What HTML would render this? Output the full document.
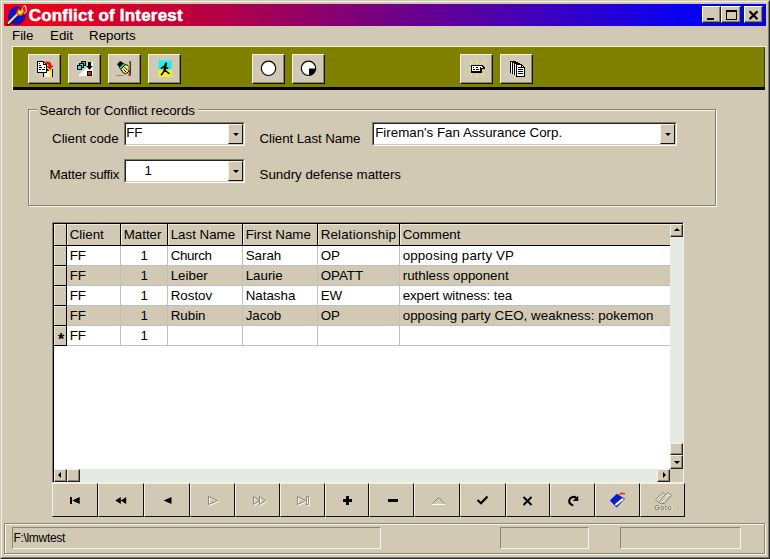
<!DOCTYPE html>
<html>
<head>
<meta charset="utf-8">
<title>Conflict of Interest</title>
<style>
html,body{margin:0;padding:0;}
body{width:770px;height:559px;overflow:hidden;background:#d1c9b3;font-family:"Liberation Sans",sans-serif;font-size:13.33px;color:#000;position:relative;}
.abs{position:absolute;}
#win{position:absolute;left:0;top:0;width:770px;height:559px;background:#d1c9b3;box-sizing:border-box;
 border-top:1px solid #d1c9b3;border-left:1px solid #d1c9b3;border-right:1px solid #2a2a2a;border-bottom:1px solid #2a2a2a;}
#win2{position:absolute;left:0;top:0;right:0;bottom:0;border-top:1px solid #f4f1e6;border-left:1px solid #f4f1e6;border-right:1px solid #7f7b6d;border-bottom:1px solid #7f7b6d;}
#title{position:absolute;left:4px;top:4px;width:762px;height:22px;background:linear-gradient(to right,rgb(240,0,24) 0%,rgb(228,0,32) 8%,rgb(194,0,56) 23%,rgb(152,0,96) 37.5%,rgb(110,0,136) 52%,rgb(78,0,172) 65%,rgb(40,0,212) 78%,rgb(6,0,244) 90%,rgb(0,0,252) 100%);}
#title .txt{position:absolute;left:24.7px;top:2px;-webkit-text-stroke:0.5px #fff;font-weight:bold;font-size:17px;line-height:20px;color:#fff;letter-spacing:0.2px;white-space:nowrap;}
.cbtn{position:absolute;top:2px;height:17px;width:19px;background:#d1c9b3;box-sizing:border-box;border-top:1px solid #fff;border-left:1px solid #fff;border-right:1px solid #222;border-bottom:1px solid #222;}
.cbtn:after{content:"";position:absolute;left:0;top:0;right:0;bottom:0;border-right:1px solid #7f7b6d;border-bottom:1px solid #7f7b6d;}
.menu{position:absolute;top:28px;font-size:13.33px;line-height:16px;white-space:nowrap;}
#tb{position:absolute;left:13px;top:47px;width:752px;height:40px;background:#808000;box-shadow:inset -1px 0 0 #3a3a10;}
#tb:before{content:'';position:absolute;left:0;top:40px;width:752px;height:3px;background:#000;}
#tb:after{content:'';position:absolute;left:-1px;top:-1px;width:754px;height:44px;box-sizing:border-box;border-left:1px solid #f6f2d2;border-top:1px solid #f6f2d2;pointer-events:none;}
.tbtn{position:absolute;top:7px;width:33px;height:30px;background:#d1c9b3;box-sizing:border-box;border-top:1px solid #f4f0e4;border-left:1px solid #f4f0e4;border-right:1px solid #101008;border-bottom:1px solid #101008;box-shadow:inset -1px -1px 0 #8c8672;}
.tbtn svg{position:absolute;left:0;top:0;}
.lbl{position:absolute;white-space:nowrap;font-size:13.33px;line-height:16px;}
.combo{position:absolute;height:24px;background:#fff;box-sizing:border-box;border-top:1px solid #7f7b6d;border-left:1px solid #7f7b6d;border-right:1px solid #fff;border-bottom:1px solid #fff;}
.combo .in{position:absolute;left:0;top:0;right:0;bottom:0;border-top:1px solid #222;border-left:1px solid #222;border-right:1px solid #d1c9b3;border-bottom:1px solid #d1c9b3;}
.combo .t{position:absolute;top:2px;font-size:13.33px;line-height:16px;white-space:nowrap;}
.combo .dd{position:absolute;right:1px;top:1px;width:15px;bottom:1px;background:#d1c9b3;box-sizing:border-box;border-top:1px solid #f4f0e4;border-left:1px solid #f4f0e4;border-right:1px solid #111;border-bottom:1px solid #111;}
.combo .dd:after{content:"";position:absolute;left:4px;top:8px;border-left:3px solid transparent;border-right:3px solid transparent;border-top:3px solid #000;}

#grid{position:absolute;left:52px;top:222px;width:632px;height:261px;background:#fff;box-sizing:border-box;border-top:1px solid #857f6c;border-left:1px solid #857f6c;border-right:1px solid #f4f0e4;border-bottom:1px solid #f4f0e4;box-shadow:inset 1px 1px 0 #000;}
#grid>div{margin-left:-1px;margin-top:-1px;}
.gh{position:absolute;top:2px;height:21px;background:#d1c9b3;border-right:1px solid #000;border-bottom:1px solid #000;box-shadow:inset 1px 1px 0 #efe9d8;}
.gh span{top:3px !important;}
.gh span,.gc span{position:absolute;left:2.7px;top:2px;font-size:13.33px;line-height:16px;white-space:nowrap;}
.gi{position:absolute;left:2px;width:12px;height:19px;background:#d1c9b3;border-right:1px solid #000;border-bottom:1px solid #000;box-shadow:inset 1px 1px 0 #efe9d8;}
.gi span{position:absolute;left:4px;top:4px;font-size:16px;line-height:20px;font-weight:bold;}
.gc{position:absolute;height:19px;background:#fff;border-right:1px solid #c0c0c0;border-bottom:1px solid #c0c0c0;}
.gc.alt{background:#d1c9b3;}
.gc.num span{left:auto;right:19px;}
.vsb{position:absolute;left:618px;top:2px;width:13px;height:245px;background:#e6eae4;}
.hsb{position:absolute;left:2px;top:247px;width:616px;height:13px;background:#e6eae4;}
.sbtn{position:absolute;width:13px;height:13px;background:#d1c9b3;box-sizing:border-box;box-shadow:inset -1px -1px 0 #8c8672;border-top:1px solid #f4f0e4;border-left:1px solid #f4f0e4;border-right:1px solid #222;border-bottom:1px solid #222;}
.sbtn i{position:absolute;width:0;height:0;}
.sbtn i.up{left:3px;top:3px;border-left:3px solid transparent;border-right:3px solid transparent;border-bottom:3px solid #000;}
.sbtn i.dn{left:3px;top:5px;border-left:3px solid transparent;border-right:3px solid transparent;border-top:3px solid #000;}
.sbtn i.lf{left:3px;top:2px;border-top:3px solid transparent;border-bottom:3px solid transparent;border-right:3px solid #000;}
.sbtn i.rt{left:5px;top:2px;border-top:3px solid transparent;border-bottom:3px solid transparent;border-left:3px solid #000;}

.nbtn{position:absolute;top:483px;height:34px;background:#d1c9b3;box-sizing:border-box;border-top:1px solid #f4f0e4;border-left:1px solid #f4f0e4;border-right:1px solid #111;border-bottom:1px solid #111;}
.nbtn svg{position:absolute;left:-1px;top:-1px;}
.sp{position:absolute;top:527px;height:22px;box-sizing:border-box;border-top:1px solid #8c8672;border-left:1px solid #8c8672;border-right:1px solid #f8f4ea;border-bottom:1px solid #f8f4ea;}
.sp span{position:absolute;left:0.4px;top:3px;letter-spacing:-0.3px;font-size:12px;line-height:14px;white-space:nowrap;}
</style>
</head>
<body>
<div id="win"><div id="win2"></div></div>

<!-- title bar -->
<div id="title">
  <svg class="abs" style="left:1px;top:0px" width="24" height="22" viewBox="0 0 24 22">
    <ellipse cx="11.8" cy="11.8" rx="8.2" ry="9" fill="#1010d8" stroke="#101060" stroke-width="0.6" transform="rotate(25 11.8 11.8)"/>
    <path d="M3.5 19.5 L13 10" stroke="#1a1a1a" stroke-width="4" stroke-linecap="round"/>
    <path d="M3.5 19 L13 9.5" stroke="#d8d8d8" stroke-width="2.2" stroke-linecap="round"/>
    <path d="M11 8 L13 3.5 L15 6 L17 1 L19 5 L21.5 3 L20.5 8 L17 12 L13.5 12 Z" fill="#e02010"/>
    <path d="M12.5 8.5 L14 5.5 L15.5 7.5 L17.5 4 L18.5 7.5 L16.5 10.5 L13.5 10.5 Z" fill="#ffe020"/>
    <path d="M18 3 L20.5 1.5 L21.5 7 L19 10" stroke="#fff" stroke-width="1" fill="none"/>
  </svg>
  <div class="txt">Conflict of Interest</div>
  <div class="cbtn" style="left:698px"><svg class="abs" style="left:0;top:0" width="17" height="15"><rect x="4" y="11" width="7" height="2" fill="#000"/></svg></div>
  <div class="cbtn" style="left:717px;width:20px"><svg class="abs" style="left:0;top:0" width="18" height="15"><rect x="4.5" y="3.5" width="10" height="9" fill="none" stroke="#000" stroke-width="1"/><rect x="4" y="3" width="11" height="2" fill="#000"/></svg></div>
  <div class="cbtn" style="left:740px"><svg class="abs" style="left:0;top:0" width="17" height="15"><path d="M4.5 4.2 L12.5 12.2 M12.5 4.2 L4.5 12.2" stroke="#000" stroke-width="2.2"/></svg></div>
</div>

<!-- menu -->
<div class="menu" style="left:12px">File</div>
<div class="menu" style="left:50px">Edit</div>
<div class="menu" style="left:89px">Reports</div>

<!-- toolbar -->
<div id="tb">
  <div class="tbtn" style="left:15px" id="b1"><svg width="33" height="30" viewBox="0 0 33 30" style="left:-1px;top:-1px"><rect x="16" y="16" width="8.500" height="6.800" fill="#fff"/><rect x="16" y="18" width="1.600" height="4.800" fill="#f4ec90"/><rect x="21" y="15" width="3.200" height="7.800" fill="#f4f060"/><rect x="20" y="14.500" width="3" height="2.500" fill="#e8e020"/>
<g shape-rendering="crispEdges">
<path d="M9.500 7.500 H15.500 L18.500 10.500 V18.500 H9.500 Z" fill="#fff" stroke="#000"/>
<path d="M15.500 7.500 V10.500 H18.500" fill="none" stroke="#000"/>
<path d="M11 9.500 H12 M11 11.500 H13 M11 13.500 H14 M16 13.500 H17 M11 15.500 H13 M14 15.500 H17" stroke="#000"/>
<rect x="15" y="18" width="1" height="5" fill="#000"/><rect x="24" y="15" width="1" height="8" fill="#000"/><rect x="18" y="15" width="2" height="2" fill="#000"/><rect x="19" y="16" width="2" height="1" fill="#000"/>
</g>
<path d="M17.300 7.800 C21.500 7 23.800 8.500 23.600 11.800 L25.600 11.800 L22 16 L18.400 12 L20.600 12 C20.600 10.600 19.500 10.200 17.800 10.400 Z" fill="#f01010"/></svg></div>
  <div class="tbtn" style="left:55px" id="b2"><svg width="33" height="30" viewBox="0 0 33 30" style="left:-1px;top:-1px"><path d="M10 22 L25 7.300 V22 Z" fill="#fff"/>
<g shape-rendering="crispEdges">
<rect x="13.500" y="7.500" width="4" height="4" fill="#20c8b0" stroke="#000"/>
<rect x="11.500" y="9.500" width="4" height="4" fill="#30d8e0" stroke="#000"/>
<rect x="9.500" y="11.500" width="4" height="4" fill="#30e8e0" stroke="#000"/>
<rect x="20" y="8" width="3" height="4" fill="#000"/>
<rect x="19.500" y="17.500" width="4" height="4" fill="#e01818" stroke="#000"/>
</g><path d="M18.200 12 H24.800 L21.500 15.800 Z" fill="#000"/></svg></div>
  <div class="tbtn" style="left:95px" id="b3"><svg width="33" height="30" viewBox="0 0 33 30" style="left:-1px;top:-1px"><path d="M9 10.200 L12.200 7 L15.400 9 L11.600 13.600 Z" fill="#000"/>
<path d="M11.200 13.600 L15.600 9.200 L17.200 10.600 L12.800 15.200 Z" fill="#20e0e0" stroke="#000" stroke-width="0.700"/>
<path d="M12.800 15.200 L17.200 10.600 L20.400 11.600 L21 17.400 L17.600 20 L14.800 18.400 Z" fill="#f4f070" stroke="#000" stroke-width="1"/>
<path d="M16.500 13.200 L19.500 16.200 M15.600 15.600 L18.200 18.200" stroke="#000" stroke-width="1" fill="none"/>
<path d="M22.100 7.200 V21" stroke="#000" stroke-width="1.300"/><path d="M20.900 9 V16" stroke="#e8d850" stroke-width="1.100"/>
<path d="M20 20.200 H22.800 V21.800 H20.600 Z" fill="#d01010"/>
<path d="M8.500 21.500 H15.500" stroke="#8c8672" stroke-width="1"/></svg></div>
  <div class="tbtn" style="left:135px" id="b4"><svg width="33" height="30" viewBox="0 0 33 30" style="left:-1px;top:-1px"><rect x="10.600" y="6.400" width="13.300" height="9.100" fill="#20f0f0"/><rect x="10.600" y="15.500" width="13.300" height="7.400" fill="#f8f020"/>
<circle cx="18" cy="9.700" r="1.250" fill="#000"/>
<path d="M17.900 11 L16.700 16 L14.400 19.600 L13.400 20.600 M16.800 16 L20 18.800 L21.200 19.400 M17.300 11.600 L14.800 13.200 L13.300 14.400 M17.300 13.800 L19.800 14.200" stroke="#000" stroke-width="1.500" fill="none" stroke-linecap="round" stroke-linejoin="round"/><path d="M17.200 11.500 L16.600 15.500" stroke="#000" stroke-width="2.300" stroke-linecap="round"/></svg></div>
  <div class="tbtn" style="left:239px" id="b5"><svg width="33" height="30" viewBox="0 0 33 30" style="left:-1px;top:-1px"><circle cx="16.5" cy="14.3" r="7.2" fill="#fff" stroke="#000" stroke-width="1.2"/></svg></div>
  <div class="tbtn" style="left:279px" id="b6"><svg width="33" height="30" viewBox="0 0 33 30" style="left:-1px;top:-1px"><circle cx="16.5" cy="14.3" r="7.2" fill="#fff" stroke="#000" stroke-width="1.2"/><path d="M17 14.5 H23.5 A7 7 0 0 1 17 21.3 Z" fill="#000"/></svg></div>
  <div class="tbtn" style="left:447px" id="b7"><svg width="33" height="30" viewBox="0 0 33 30" style="left:-1px;top:-1px"><g stroke="#f0f038" stroke-width="1.5" stroke-linecap="butt"><path d="M17 9.800 V6.800 M12.200 10.200 L10.300 7.800 M21.800 10.200 L23.800 7.800 M10 14.800 H8.500 M12 20 L10.200 22.300 M17 20.200 V23 M21.800 20 L24 22.500"/></g>
<g shape-rendering="crispEdges"><rect x="11" y="11" width="11" height="8" fill="#000"/><rect x="12" y="12" width="8" height="5" fill="#fff"/>
<path d="M18 11 H22 L25 14 V15 H21 V12 H18 Z" fill="#000"/><path d="M19 12 H21.500 L23.500 14 H21 Z" fill="#fff"/>
<rect x="13" y="13" width="1" height="1" fill="#000"/><rect x="13" y="15" width="2" height="1" fill="#000"/><path d="M15.500 13.500 H18 M16 15.500 H19" stroke="#000"/></g></svg></div>
  <div class="tbtn" style="left:487px" id="b8"><svg width="33" height="30" viewBox="0 0 33 30" style="left:-1px;top:-1px"><g shape-rendering="crispEdges">
<path d="M10 7 H16 V19 H10 Z" fill="#000"/><path d="M11 8 H12 V19 H11 Z M13 8 H14 V20 H13 Z" fill="#fff"/>
<path d="M12 8 H18 V20 H12Z" fill="#000"/><path d="M13 9 H14 V20 H13 Z" fill="#fff"/>
<path d="M14 9 H20 V21 H14Z" fill="#000"/><path d="M15 10 H16 V21 H15 Z" fill="#fff"/>
<path d="M16.5 10.500 H21.5 L24.5 13.5 V22.5 H16.5 Z" fill="#fff" stroke="#000"/>
<path d="M21.5 10.500 V13.5 H24.5" fill="none" stroke="#000"/>
<path d="M18 13.5 H21 M18 15.5 H23 M18 17.5 H23 M18 19.5 H23" stroke="#000"/>
</g></svg></div>
</div>

<!-- group box -->
<div class="abs" style="left:28px;top:109px;width:686px;height:95px;border:1px solid #857f6c;box-shadow:1px 1px 0 #faf6ec, inset 1px 1px 0 #faf6ec;"></div>
<div class="lbl" style="left:36.5px;top:103px;background:#d1c9b3;padding:0 3px;letter-spacing:-0.09px">Search for Conflict records</div>

<div class="lbl" style="left:52px;top:131px">Client code</div>
<div class="combo" style="left:124px;top:122px;width:121px"><div class="in"></div><div class="t" style="left:1.2px">FF</div><div class="dd"></div></div>
<div class="lbl" style="left:49.6px;top:167px;letter-spacing:-0.2px">Matter suffix</div>
<div class="combo" style="left:124px;top:159px;width:121px"><div class="in"></div><div class="t" style="left:19.5px;top:3px">1</div><div class="dd"></div></div>
<div class="lbl" style="left:259.5px;top:131px;letter-spacing:-0.08px">Client Last Name</div>
<div class="combo" style="left:372px;top:122px;width:305px"><div class="in"></div><div class="t" style="left:2.2px">Fireman's Fan Assurance Corp.</div><div class="dd"></div></div>
<div class="lbl" style="left:259.5px;top:167px">Sundry defense matters</div>

<div id="grid">
<div class="gh" style="left:2px;width:12px"></div>
<div class="gh" style="left:15px;width:53px"><span>Client</span></div>
<div class="gh" style="left:69px;width:46px"><span>Matter</span></div>
<div class="gh" style="left:116px;width:74px"><span>Last Name</span></div>
<div class="gh" style="left:191px;width:74px"><span>First Name</span></div>
<div class="gh" style="left:266px;width:81px"><span style="letter-spacing:0.18px">Relationship</span></div>
<div class="gh" style="left:348px;width:270px"><span>Comment</span></div>
<div class="gi" style="top:24px"></div>
<div class="gc" style="left:15px;top:24px;width:53px"><span>FF</span></div>
<div class="gc num" style="left:69px;top:24px;width:46px"><span>1</span></div>
<div class="gc" style="left:116px;top:24px;width:74px"><span style="letter-spacing:-0.35px">Church</span></div>
<div class="gc" style="left:191px;top:24px;width:74px"><span>Sarah</span></div>
<div class="gc" style="left:266px;top:24px;width:81px"><span>OP</span></div>
<div class="gc" style="left:348px;top:24px;width:270px"><span style="letter-spacing:0.15px">opposing party VP</span></div>
<div class="gi" style="top:44px"></div>
<div class="gc alt" style="left:15px;top:44px;width:53px"><span>FF</span></div>
<div class="gc alt num" style="left:69px;top:44px;width:46px"><span>1</span></div>
<div class="gc alt" style="left:116px;top:44px;width:74px"><span>Leiber</span></div>
<div class="gc alt" style="left:191px;top:44px;width:74px"><span>Laurie</span></div>
<div class="gc alt" style="left:266px;top:44px;width:81px"><span>OPATT</span></div>
<div class="gc alt" style="left:348px;top:44px;width:270px"><span>ruthless opponent</span></div>
<div class="gi" style="top:64px"></div>
<div class="gc" style="left:15px;top:64px;width:53px"><span>FF</span></div>
<div class="gc num" style="left:69px;top:64px;width:46px"><span>1</span></div>
<div class="gc" style="left:116px;top:64px;width:74px"><span>Rostov</span></div>
<div class="gc" style="left:191px;top:64px;width:74px"><span>Natasha</span></div>
<div class="gc" style="left:266px;top:64px;width:81px"><span>EW</span></div>
<div class="gc" style="left:348px;top:64px;width:270px"><span style="letter-spacing:-0.09px">expert witness: tea</span></div>
<div class="gi" style="top:84px"></div>
<div class="gc alt" style="left:15px;top:84px;width:53px"><span>FF</span></div>
<div class="gc alt num" style="left:69px;top:84px;width:46px"><span>1</span></div>
<div class="gc alt" style="left:116px;top:84px;width:74px"><span>Rubin</span></div>
<div class="gc alt" style="left:191px;top:84px;width:74px"><span>Jacob</span></div>
<div class="gc alt" style="left:266px;top:84px;width:81px"><span>OP</span></div>
<div class="gc alt" style="left:348px;top:84px;width:270px"><span style="letter-spacing:0.05px">opposing party CEO, weakness: pokemon</span></div>
<div class="gi" style="top:104px"><span>*</span></div>
<div class="gc" style="left:15px;top:104px;width:53px"><span>FF</span></div>
<div class="gc num" style="left:69px;top:104px;width:46px"><span>1</span></div>
<div class="gc" style="left:116px;top:104px;width:74px"><span></span></div>
<div class="gc" style="left:191px;top:104px;width:74px"><span></span></div>
<div class="gc" style="left:266px;top:104px;width:81px"><span></span></div>
<div class="gc" style="left:348px;top:104px;width:270px"><span></span></div>
<div class="vsb"></div><div class="hsb"></div>
<div class="sbtn" style="left:618px;top:2px"><i class="up"></i></div>
<div class="sbtn" style="left:618px;top:221px;height:12px"></div>
<div class="sbtn" style="left:618px;top:233px;height:14px"><i class="dn"></i></div>
<div class="sbtn" style="left:2px;top:247px"><i class="lf"></i></div>
<div class="sbtn" style="left:15px;top:247px;width:13px"></div>
<div class="sbtn" style="left:605px;top:247px;width:13px"><i class="rt"></i></div>
<div class="abs" style="left:618px;top:247px;width:13px;height:13px;background:#d1c9b3"></div>
</div>


<div class="nbtn" style="left:52px;width:46px"></div>
<div class="nbtn" style="left:98px;width:46px"></div>
<div class="nbtn" style="left:144px;width:46px"></div>
<div class="nbtn" style="left:190px;width:45px"></div>
<div class="nbtn" style="left:235px;width:45px"></div>
<div class="nbtn" style="left:280px;width:45px"></div>
<div class="nbtn" style="left:325px;width:44px"></div>
<div class="nbtn" style="left:369px;width:45px"></div>
<div class="nbtn" style="left:414px;width:46px"></div>
<div class="nbtn" style="left:460px;width:46px"></div>
<div class="nbtn" style="left:506px;width:44px"></div>
<div class="nbtn" style="left:550px;width:45px"></div>
<div class="nbtn" style="left:595px;width:45px"></div>
<div class="nbtn" style="left:640px;width:45px"></div>
<svg class="abs" style="left:52px;top:483px" width="633" height="34" viewBox="52 483 633 34">
<rect x="70" y="497" width="2" height="7" fill="#000"/><path d="M79.7 497 V504 L72.3 500.5 Z" fill="#000"/>
<path d="M120.8 497 V504 L115.3 500.5 Z M126.2 497 V504 L120.8 500.5 Z" fill="#000"/>
<path d="M171.5 497 V504 L163.6 500.5 Z" fill="#000"/>
<path d="M209.5 497.500 V505.500 L218.500 501.500 Z" fill="none" stroke="#fff"/><path d="M208.5 496.500 V504.500 L217.500 500.500 Z" fill="none" stroke="#8c8672"/>
<path d="M254.5 497.500 V505.500 L260.5 501.500 Z M260.5 497.500 V505.500 L266.5 501.500 Z" fill="none" stroke="#fff"/><path d="M253.5 496.500 V504.500 L259.5 500.500 Z M259.5 496.500 V504.500 L265.5 500.500 Z" fill="none" stroke="#8c8672"/>
<path d="M298.5 497.500 V505.500 L306.5 501.500 Z M307.5 497.500 H309.5 V505.500 H307.5 Z" fill="none" stroke="#fff"/><path d="M297.5 496.500 V504.500 L305.5 500.500 Z M306.5 496.500 H308.5 V504.500 H306.5 Z" fill="none" stroke="#8c8672"/>
<path d="M346 496 h3 v3 h3 v3 h-3 v3 h-3 v-3 h-3 v-3 h3 Z" fill="#000"/>
<rect x="388" y="499" width="10" height="3" fill="#000"/>
<path d="M432.5 503.500 L438.5 497.500 L444.5 503.500" fill="none" stroke="#8c8672"/><path d="M432 504.500 H445" stroke="#fff"/>
<path d="M477.5 500 L481 503.300 L487.500 496.500" fill="none" stroke="#000" stroke-width="2.2"/>
<path d="M523.5 497 L531.5 505 M531.5 497 L523.500 505" stroke="#000" stroke-width="2"/>
<path d="M573.300 505.200 A4.300 4.300 0 0 1 569.200 500.500 A4.300 4.300 0 0 1 576.300 498" fill="none" stroke="#000" stroke-width="2.100"/><path d="M578.200 495.800 V500.900 H572.800 Z" fill="#000"/>
<path d="M609.800 500.600 L616.800 493.800 L625 498.800 L616.600 507.500 Z" fill="#1018c8"/><path d="M614.800 504.200 L622.800 497.800 L623.800 499.600 L616 506 Z" fill="#fff"/><path d="M619.500 494.400 L621 493.200 L625 493.800" stroke="#e03020" stroke-width="1.500" fill="none"/><g stroke="#857f6c" fill="#ece6d6" stroke-width="1"><path d="M655.500 499.500 L662.500 492.500 L665.500 494.500 L658.500 502.500 Z"/><path d="M658.500 502.500 L665.500 494.500 L668.500 493 L671.500 495.500 L664.500 503.500 L661.500 503.500 Z"/><path d="M657.500 500 L663.500 494 M661 502 L667 495.500 M663 503 L669.500 496" fill="none" stroke-width="0.700"/></g>
<text x="664" y="510.300" text-anchor="middle" font-family="Liberation Sans, sans-serif" font-size="7" font-weight="bold" fill="#fff" letter-spacing="0.300">Goto</text>
<text x="663.300" y="509.600" text-anchor="middle" font-family="Liberation Sans, sans-serif" font-size="7" font-weight="bold" fill="#857f6c" letter-spacing="0.300">Goto</text></svg>
<div class="abs" style="left:4px;top:523px;width:761px;height:31px;box-sizing:border-box;border:1px solid #8c8672;box-shadow:1px 1px 0 #f8f4ea, inset 1px 1px 0 #f8f4ea;"></div>
<div class="sp" style="left:12px;width:369px"><span>F:\lmwtest</span></div>
<div class="sp" style="left:500px;width:89px"></div>
<div class="sp" style="left:620px;width:121px"></div>

</body>
</html>
